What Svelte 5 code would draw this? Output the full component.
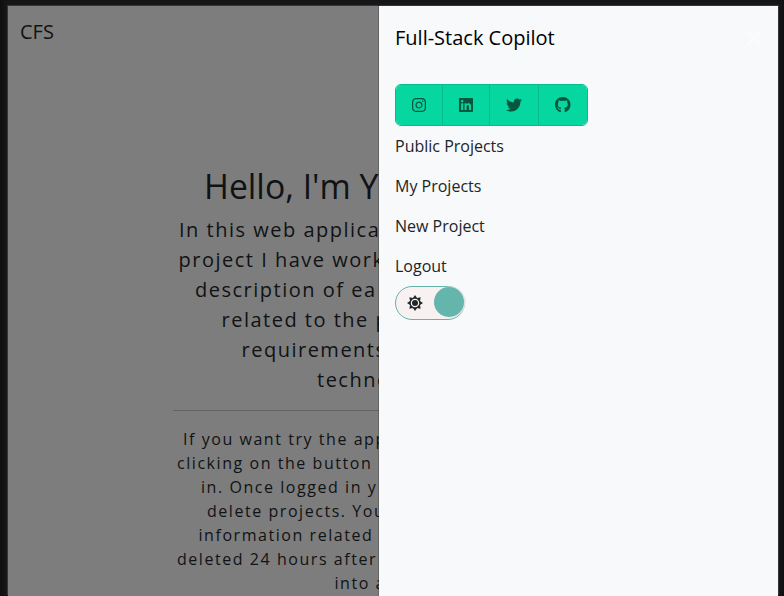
<script>
  const intro = [
    [179, 'In this web applica'],
    [178.5, 'project I have work'],
    [195, 'description of ea'],
    [221.5, 'related to the p'],
    [241.5, 'requirements'],
    [317, 'techno']
  ];
  const guide = [
    [183, 'If you want try the app'],
    [177, 'clicking on the button'],
    [201, 'in. Once logged in y'],
    [207, 'delete projects. You'],
    [198.5, 'information related'],
    [177, 'deleted 24 hours after'],
    [334.5, 'into a']
  ];
  const socials = [
    { name: 'Instagram', w: 47, icon: 14, box: '0 32 448 448', d: 'M224.1 141c-63.6 0-114.9 51.3-114.9 114.9s51.3 114.9 114.9 114.9S339 319.5 339 255.9 287.7 141 224.1 141zm0 189.6c-41.1 0-74.7-33.5-74.7-74.7s33.5-74.7 74.7-74.7 74.7 33.5 74.7 74.7-33.6 74.7-74.7 74.7zm146.4-194.3c0 14.9-12 26.8-26.8 26.8-14.9 0-26.8-12-26.8-26.8s12-26.8 26.8-26.8 26.8 12 26.8 26.8zm76.1 27.2c-1.7-35.9-9.9-67.7-36.2-93.9-26.2-26.2-58-34.4-93.9-36.2-37-2.1-147.9-2.1-184.9 0-35.8 1.7-67.6 9.9-93.9 36.1s-34.4 58-36.2 93.9c-2.1 37-2.1 147.9 0 184.9 1.7 35.9 9.9 67.7 36.2 93.9s58 34.4 93.9 36.2c37 2.1 147.9 2.1 184.9 0 35.9-1.7 67.7-9.9 93.9-36.2 26.2-26.2 34.4-58 36.2-93.9 2.1-37 2.1-147.8 0-184.8zM398.8 388c-7.8 19.6-22.9 34.7-42.6 42.6-29.5 11.7-99.5 9-132.1 9s-102.7 2.6-132.1-9c-19.6-7.8-34.7-22.9-42.6-42.6-11.7-29.5-9-99.5-9-132.1s-2.6-102.7 9-132.1c7.8-19.6 22.9-34.7 42.6-42.6 29.5-11.7 99.5-9 132.1-9s102.7-2.6 132.1 9c19.6 7.8 34.7 22.9 42.6 42.6 11.7 29.5 9 99.5 9 132.1s2.7 102.7-9 132.1z' },
    { name: 'LinkedIn', w: 47, icon: 14, box: '0 32 448 448', d: 'M416 32H31.9C14.3 32 0 46.5 0 64.3v383.4C0 465.5 14.3 480 31.9 480H416c17.6 0 32-14.5 32-32.3V64.3c0-17.8-14.4-32.3-32-32.3zM135.4 416H69V202.2h66.5V416zm-33.2-243c-21.3 0-38.5-17.3-38.5-38.5S80.9 96 102.2 96c21.2 0 38.5 17.3 38.5 38.5 0 21.3-17.2 38.5-38.5 38.5zm282.1 243h-66.4V312c0-24.8-.5-56.7-34.5-56.7-34.6 0-39.9 27-39.9 54.9V416h-66.4V202.2h63.7v29.2h.9c8.9-16.8 30.6-34.5 62.9-34.5 67.2 0 79.7 44.3 79.7 101.9V416z' },
    { name: 'Twitter', w: 49, icon: 16, box: '0 0 512 512', d: 'M459.37 151.716c.325 4.548.325 9.097.325 13.645 0 138.72-105.583 298.558-298.558 298.558-59.452 0-114.68-17.219-161.137-47.106 8.447.974 16.568 1.299 25.34 1.299 49.055 0 94.213-16.568 130.274-44.832-46.132-.975-84.792-31.188-98.112-72.772 6.498.974 12.995 1.624 19.818 1.624 9.421 0 18.843-1.3 27.614-3.573-48.081-9.747-84.143-51.98-84.143-102.985v-1.299c13.969 7.797 30.214 12.67 47.431 13.319-28.264-18.843-46.781-51.005-46.781-87.391 0-19.492 5.197-37.36 14.294-52.954 51.655 63.675 129.3 105.258 216.365 109.807-1.624-7.797-2.599-15.918-2.599-24.04 0-57.828 46.782-104.934 104.934-104.934 30.213 0 57.502 12.67 76.67 33.137 23.715-4.548 46.456-13.32 66.599-25.34-7.798 24.366-24.366 44.833-46.132 57.827 21.117-2.273 41.584-8.122 60.426-16.243-14.292 20.791-32.161 39.308-52.628 54.253z' },
    { name: 'GitHub', w: 48, icon: 15.5, box: '0 8 496 496', d: 'M244.8 8C106.1 8 0 113.3 0 252c0 110.9 69.8 205.8 169.5 239.2 12.8 2.3 17.3-5.6 17.3-12.1 0-6.2-.3-40.4-.3-61.4 0 0-70 15-84.7-29.8 0 0-11.4-29.1-27.8-36.6 0 0-22.9-15.7 1.6-15.4 0 0 24.9 2 38.6 25.8 21.9 38.6 58.6 27.5 72.9 20.9 2.3-16 8.8-27.1 16-33.7-55.9-6.2-112.3-14.3-112.3-110.5 0-27.5 7.6-41.3 23.6-58.9-2.6-6.5-11.1-33.3 2.6-67.9 20.9-6.5 69 27 69 27 20-5.6 41.5-8.5 62.8-8.5s42.8 2.9 62.8 8.5c0 0 48.1-33.6 69-27 13.7 34.7 5.2 61.4 2.6 67.9 16 17.7 25.8 31.5 25.8 58.9 0 96.5-58.9 104.2-114.8 110.5 9.2 7.9 17 22.9 17 46.4 0 33.7-.3 75.4-.3 83.6 0 6.5 4.6 14.4 17.3 12.1C428.2 457.8 496 362.9 496 252 496 113.3 383.5 8 244.8 8z' }
  ];
  const links = ['Public Projects', 'My Projects', 'New Project', 'Logout'];
</script>

<div class="screen">
  <main class="page">
    <nav>CFS</nav>
    <h1>Hello, I'm Y</h1>
    <div class="intro">
      {#each intro as [x, text]}<p style="padding-left: {x - 173}px">{text}</p>{/each}
    </div>
    <div class="guide">
      {#each guide as [x, text]}<p style="padding-left: {x - 173}px">{text}</p>{/each}
    </div>
  </main>
  <aside>
    <header>
      <h5>Full-Stack Copilot</h5>
      <svg class="close" viewBox="0 0 16 16" aria-label="Close"><path d="M1 1L15 15M15 1L1 15" /></svg>
    </header>
    <div class="group">
      {#each socials as s}
        <button aria-label={s.name} style="width: {s.w}px">
          <svg viewBox={s.box} style="width: {s.icon}px; height: {s.icon}px"><path d={s.d} /></svg>
        </button>
      {/each}
    </div>
    <ul>
      {#each links as link}<li>{link}</li>{/each}
    </ul>
    <div class="toggle">
      <svg viewBox="-8 -8 16 16">
        <circle r="4.9" fill="none" stroke="#212529" stroke-width="1.3" />
        <circle r="3" />
        {#each [0, 45, 90, 135, 180, 225, 270, 315] as a}
          <path d="M-2.1-4.9L0-8L2.1-4.9Z" transform="rotate({a})" />
        {/each}
      </svg>
      <span class="knob"></span>
    </div>
  </aside>
</div>

<style>
  :global(body) { margin: 0; background: #18181a; }
  .screen {
    box-sizing: border-box;
    width: 784px;
    height: 596px;
    padding: 6px 6px 0 8px;
    display: flex;
    overflow: hidden;
    background: #18181a;
    box-shadow: inset 7px 0 7px -5px #0c0c0d, inset -5px 0 5px -4px #0c0c0d;
    font: 16px/24px "Open Sans", sans-serif;
    color: #101214;
  }
  p, h1, h5, ul { margin: 0; padding: 0; font-weight: 400; }
  .page {
    width: 371px;
    flex: none;
    overflow: hidden;
    white-space: nowrap;
    background: #7d7d7d;
    box-shadow: -1px -1px #363638;
  }
  nav { padding: 11px 12px 0; font-size: 20px; line-height: 30px; }
  h1 { padding: 118px 0 0 196px; font-size: 33.76px; line-height: 42px; }
  .intro, .guide { margin-left: 165px; }
  .intro { padding: 8px 0 15px; font-size: 20px; line-height: 30px; letter-spacing: 1.5px; border-bottom: 1px solid #626364; }
  .guide { padding-top: 16px; letter-spacing: 1.55px; }
  aside {
    box-sizing: border-box;
    width: 400px;
    flex: none;
    margin-left: -1px;
    padding: 16px;
    background: #f8f9fa;
    background-clip: padding-box;
    border-left: 1px solid rgba(0, 0, 0, 0.2);
    color: #212529;
    box-shadow: 1px -1px #363638;
  }
  header { display: flex; justify-content: space-between; align-items: center; height: 32px; }
  h5 { font-size: 20px; line-height: 30px; color: #000; }
  .close { width: 16px; height: 16px; stroke: #fcfcfa; stroke-width: 2; fill: none; }
  .group {
    display: flex;
    box-sizing: border-box;
    width: 193px;
    height: 42px;
    margin-top: 30px;
    border: 1px solid #06bc8d;
    border-radius: 6px;
    overflow: hidden;
  }
  button {
    display: flex;
    align-items: center;
    justify-content: center;
    box-sizing: border-box;
    padding: 0;
    border: 0;
    border-right: 1px solid #06bc8d;
    background: #06d6a0;
  }
  button:last-child { border-right: 0; }
  button svg { fill: #07563f; }
  ul { list-style: none; }
  li { height: 24px; padding: 8px 0; }
  .toggle {
    display: flex;
    align-items: center;
    justify-content: space-between;
    box-sizing: border-box;
    width: 70px;
    height: 34px;
    padding: 0 0 2px 11px;
    border: 1px solid #63b4aa;
    border-radius: 17px;
    background: #f8f1f1;
  }
  .toggle svg { width: 16px; height: 16px; margin-top: 2px; fill: #212529; }
  .knob { width: 30px; height: 30px; border-radius: 50%; background: #64b5ab; box-shadow: 1px 0 1px 0.5px #e6e2e2; }
</style>
